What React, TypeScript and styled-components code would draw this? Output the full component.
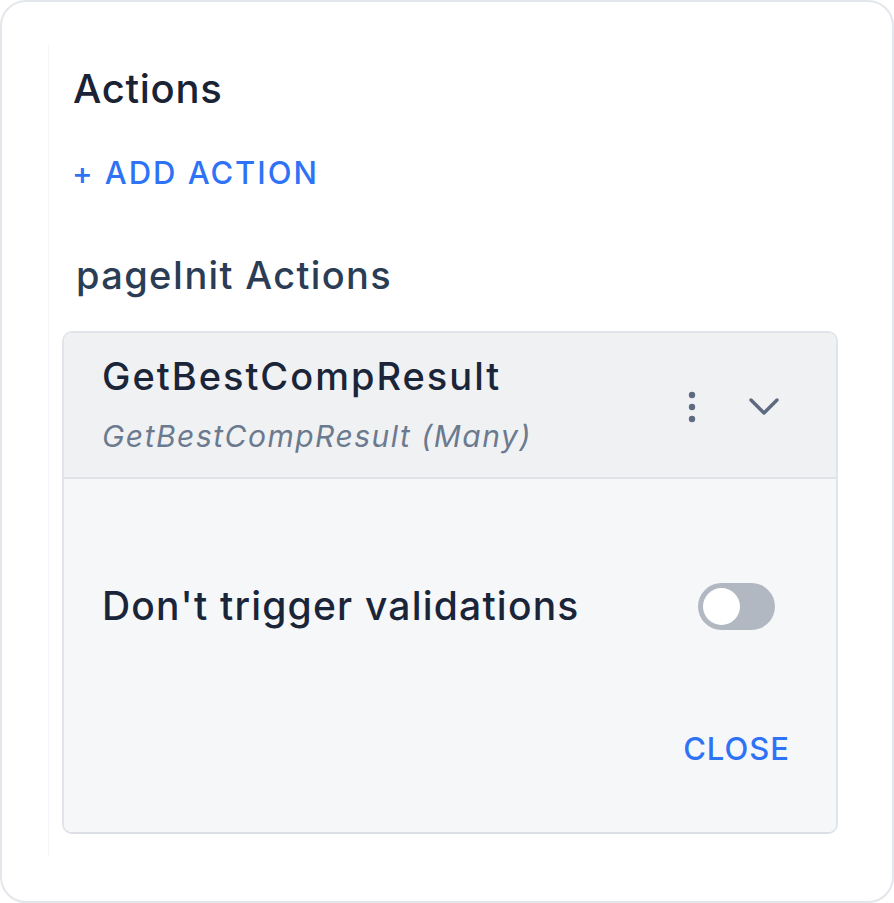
import React from "react";
import styled, { createGlobalStyle } from "styled-components";

const Global = createGlobalStyle`
  html, body { margin: 0; padding: 0; background: #ffffff; }
  body { font-family: Inter, "Noto Sans", sans-serif; -webkit-font-smoothing: antialiased; }
  * { box-sizing: border-box; }
`;

const Frame = styled.div`
  width: 894px;
  height: 903px;
  border: 2px solid #e3e6eb;
  border-radius: 26px;
  padding: 43px 54px 0 46px;
  background: #ffffff;
`;

const Panel = styled.div`
  height: 812px;
  border-left: 1px solid #f5f6f8;
  display: flex;
  flex-direction: column;
  padding: 0 0 0 13px;
`;

const Title = styled.h1`
  margin: 20px 0 0 11px;
  font-size: 40px;
  line-height: 48px;
  font-weight: 500;
  color: #1a2236;
  letter-spacing: 0.7px;
`;

const AddButton = styled.button`
  align-self: flex-start;
  margin: 40px 0 0 10px;
  padding: 0;
  border: none;
  background: none;
  font-family: inherit;
  font-size: 31px;
  line-height: 40px;
  font-weight: 500;
  letter-spacing: 1.95px;
  color: #2e73f6;
  cursor: pointer;
`;

const SectionTitle = styled.h2`
  margin: 59px 0 0 14px;
  font-size: 38px;
  line-height: 46px;
  font-weight: 500;
  color: #2b3d55;
  letter-spacing: 1.35px;
`;

const Card = styled.div`
  margin-top: 33px;
  width: 776px;
  border: 2px solid #e1e4e9;
  border-bottom-color: #dcdfe5;
  border-radius: 10px;
  overflow: hidden;
  display: flex;
  flex-direction: column;
`;

const CardHeader = styled.div`
  height: 146px;
  background: #f0f1f3;
  border-bottom: 2px solid #dfe2e7;
  display: flex;
  align-items: center;
  padding: 0 56px 0 38px;
`;

const HeaderText = styled.div`
  flex: 1;
  display: flex;
  flex-direction: column;
  margin-top: -4px;
`;

const CardTitle = styled.div`
  font-size: 38px;
  line-height: 48px;
  font-weight: 500;
  color: #1b2539;
  letter-spacing: 2px;
`;

const CardSubtitle = styled.div`
  margin-top: 18px;
  font-size: 30px;
  line-height: 36px;
  font-style: italic;
  color: #6b7a8f;
  letter-spacing: 1.5px;
`;

const IconButton = styled.button`
  border: none;
  background: none;
  padding: 0;
  display: flex;
  align-items: center;
  justify-content: center;
  cursor: pointer;
`;

const Icons = styled.div`
  display: flex;
  align-items: center;
  gap: 52px;
  margin-top: 4px;
`;

const CardBody = styled.div`
  background: #f6f7f9;
  height: 353px;
  display: flex;
  flex-direction: column;
  padding: 0 46px 0 38px;
`;

const SettingRow = styled.div`
  display: flex;
  align-items: center;
  justify-content: space-between;
  margin: 103px 15px 0 0;
`;

const SettingLabel = styled.div`
  font-size: 39px;
  line-height: 48px;
  font-weight: 500;
  color: #1b2539;
  letter-spacing: 1.2px;
`;

const Toggle = styled.div<{ on?: boolean }>`
  width: 77px;
  height: 47px;
  border-radius: 24px;
  background: ${(p) => (p.on ? "#2e73f6" : "#b2b8c2")};
  padding: 5px;
  display: flex;
  justify-content: ${(p) => (p.on ? "flex-end" : "flex-start")};
`;

const Thumb = styled.div`
  width: 37px;
  height: 37px;
  border-radius: 50%;
  background: #ffffff;
`;

const Footer = styled.div`
  display: flex;
  justify-content: flex-end;
  margin-top: 99px;
`;

const CloseButton = styled.button`
  border: none;
  background: none;
  padding: 0;
  font-family: inherit;
  font-size: 31px;
  line-height: 40px;
  font-weight: 500;
  letter-spacing: 1px;
  color: #2e73f6;
  cursor: pointer;
`;

export default function App() {
  return (
    <>
      <Global />
      <Frame>
        <Panel>
          <Title>Actions</Title>
          <AddButton>+ ADD ACTION</AddButton>
          <SectionTitle>pageInit Actions</SectionTitle>
          <Card>
            <CardHeader>
              <HeaderText>
                <CardTitle>GetBestCompResult</CardTitle>
                <CardSubtitle>GetBestCompResult (Many)</CardSubtitle>
              </HeaderText>
              <Icons>
                <IconButton aria-label="more">
                  <svg width="8" height="32" viewBox="0 0 8 32">
                    <circle cx="4" cy="4" r="3.2" fill="#5d6a80" />
                    <circle cx="4" cy="16" r="3.2" fill="#5d6a80" />
                    <circle cx="4" cy="28" r="3.2" fill="#5d6a80" />
                  </svg>
                </IconButton>
                <IconButton aria-label="expand">
                  <svg width="32" height="20" viewBox="0 0 32 20">
                    <path d="M3 3 L16 16 L29 3" fill="none" stroke="#5d6a80" strokeWidth="3.4" strokeLinecap="round" strokeLinejoin="round" />
                  </svg>
                </IconButton>
              </Icons>
            </CardHeader>
            <CardBody>
              <SettingRow>
                <SettingLabel>Don't trigger validations</SettingLabel>
                <Toggle>
                  <Thumb />
                </Toggle>
              </SettingRow>
              <Footer>
                <CloseButton>CLOSE</CloseButton>
              </Footer>
            </CardBody>
          </Card>
        </Panel>
      </Frame>
    </>
  );
}
